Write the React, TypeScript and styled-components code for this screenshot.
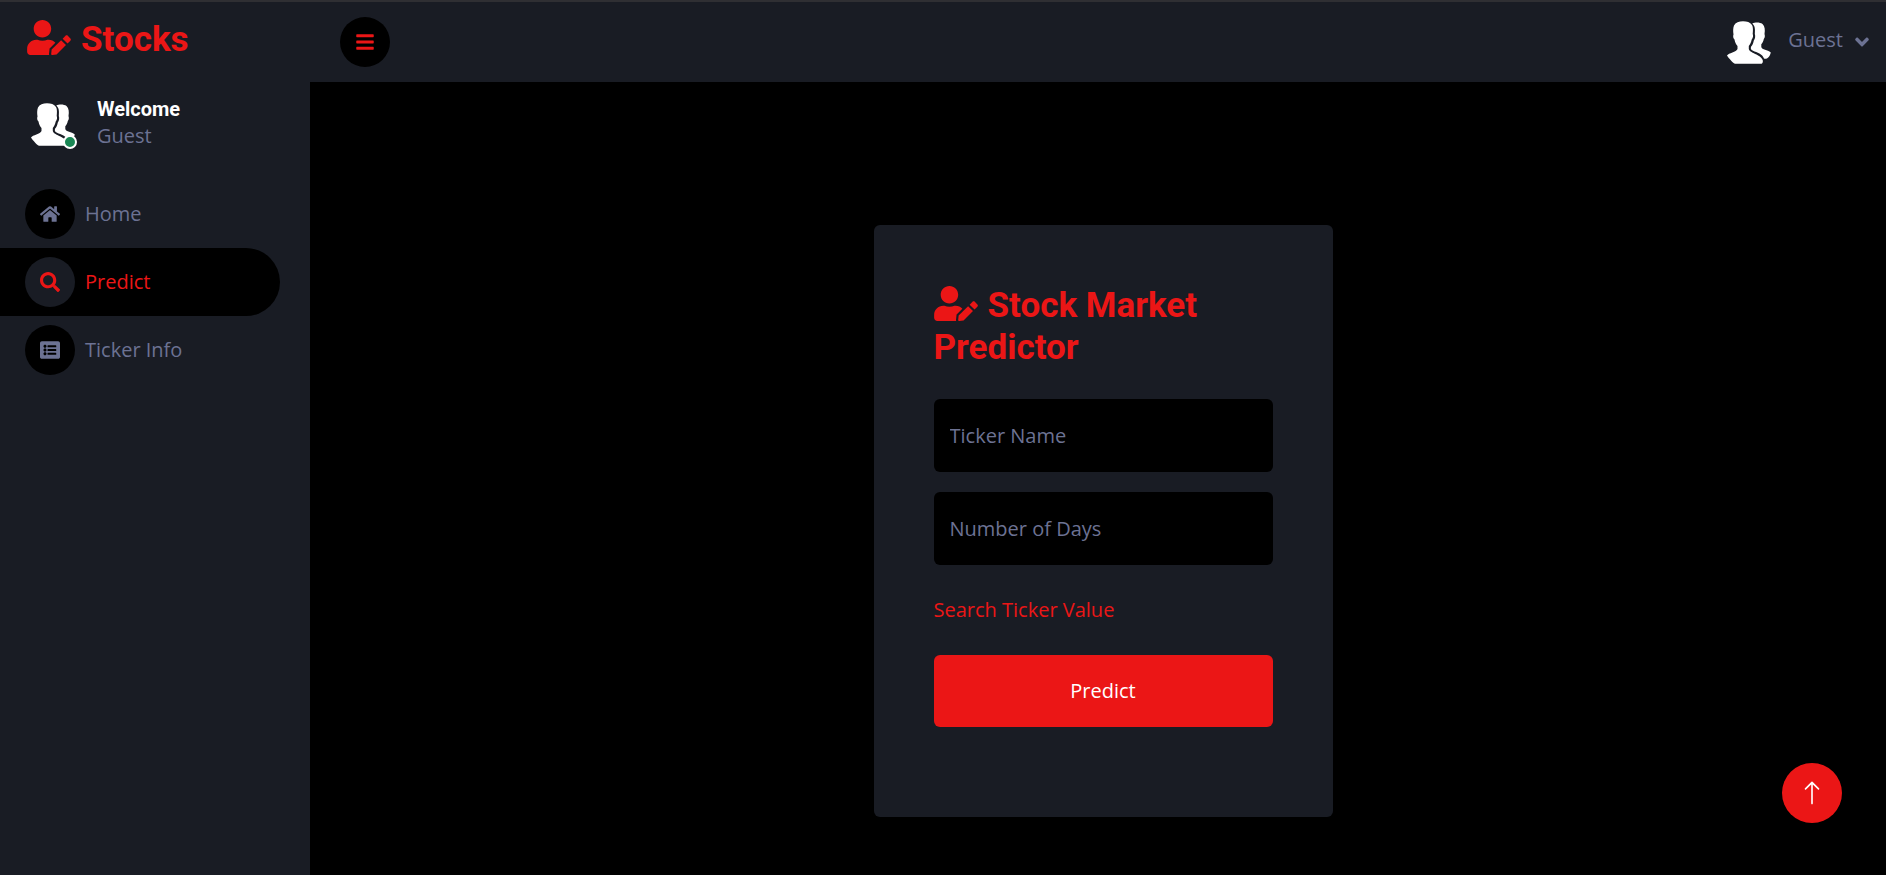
import React from "react";
import styled, { createGlobalStyle } from "styled-components";
import { FaUserEdit, FaHome, FaSearch, FaListAlt, FaBars, FaAngleDown } from "react-icons/fa";
import { BsArrowUp } from "react-icons/bs";

const red = "#eb1616";
const panel = "#191c24";
const muted = "#6c7293";

const GlobalStyle = createGlobalStyle`
  *, *::before, *::after { box-sizing: border-box; }
  body {
    margin: 0;
    background: #000;
    color: ${muted};
    font: 400 20px/30px "Open Sans", sans-serif;
  }
  button, input { font: inherit; }
  a { text-decoration: none; }
  h3, h6 { margin: 0; font-family: Roboto, sans-serif; font-weight: 700; }
`;

const Page = styled.div`
  display: grid;
  grid-template-columns: 310px 1fr;
  min-height: 100vh;
  border-top: 2px solid #2f2f33;
`;

const Sidebar = styled.aside`
  background: ${panel};
  padding: 17px 30px 20px 0;
`;

const Brand = styled.a`
  display: block;
  margin: 0 0 36px 27px;
`;

const Heading = styled.h3`
  color: ${red};
  font-size: 35px;
  line-height: 42px;

  svg { display: inline-block; width: 44px; height: 35px; vertical-align: -4px; margin-right: 10px; }
`;

const Profile = styled.div`
  display: flex;
  align-items: center;
  gap: 20px;
  margin: 0 0 29px 27px;
`;

const AvatarBox = styled.div`
  position: relative;
  width: 50px;
  height: 50px;
`;

const StatusDot = styled.span`
  position: absolute;
  right: 0;
  bottom: 0;
  width: 14px;
  height: 14px;
  border: 2px solid #fff;
  border-radius: 50%;
  background: #198754;
`;

const ProfileName = styled.h6`
  color: #fff;
  font-size: 20px;
  line-height: 24px;
`;

const Nav = styled.nav`
  display: flex;
  flex-direction: column;
`;

const NavIcon = styled.span<{ $active?: boolean }>`
  display: grid;
  place-items: center;
  width: 50px;
  height: 50px;
  border-radius: 50%;
  background: ${(p) => (p.$active ? panel : "#000")};

  svg { width: auto; height: 20px; }
`;

const NavLink = styled.a<{ $active?: boolean }>`
  display: flex;
  align-items: center;
  gap: 10px;
  padding: 9px 25px;
  border-radius: 0 34px 34px 0;
  color: ${(p) => (p.$active ? red : muted)};
  background: ${(p) => (p.$active ? "#000" : "transparent")};
`;

const Column = styled.div`
  display: flex;
  flex-direction: column;
`;

const TopBar = styled.header`
  display: flex;
  align-items: center;
  justify-content: space-between;
  height: 80px;
  padding: 0 17px 0 30px;
  background: ${panel};
`;

const MenuButton = styled.button`
  display: grid;
  place-items: center;
  width: 50px;
  height: 50px;
  padding: 0;
  border: 0;
  border-radius: 50%;
  background: #000;
  color: ${red};
`;

const UserMenu = styled.button`
  display: flex;
  align-items: center;
  padding: 0;
  border: 0;
  background: none;
  color: ${muted};
`;

const UserName = styled.span`
  margin: 0 12px 4px 15px;
`;

const Caret = styled(FaAngleDown)`
  width: 14px;
  height: 22px;
`;

const Main = styled.main`
  flex: 1;
  display: grid;
  place-items: start center;
  padding: 143px 0 30px 10px;
`;

const Card = styled.form`
  width: 459px;
  padding: 60px 60px 90px;
  border-radius: 6px;
  background: ${panel};
`;

const Fields = styled.div`
  display: grid;
  gap: 20px;
  margin: 30px 0;
`;

const Field = styled.input`
  width: 100%;
  height: 73px;
  padding: 0 16px;
  border: 0;
  border-radius: 6px;
  background: #000;
  color: ${muted};

  &::placeholder { color: ${muted}; opacity: 1; }
`;

const SearchLink = styled.a`
  display: block;
  color: ${red};
`;

const Submit = styled.button`
  display: block;
  width: 100%;
  height: 72px;
  margin-top: 30px;
  border: 0;
  border-radius: 6px;
  background: ${red};
  color: #fff;
`;

const BackToTop = styled.a`
  position: fixed;
  right: 44px;
  bottom: 52px;
  display: grid;
  place-items: center;
  width: 60px;
  height: 60px;
  border-radius: 50%;
  background: ${red};
  color: #fff;
`;

function Avatar() {
  return (
    <svg width="50" height="50" viewBox="0 0 50 50" fill="#fff" aria-hidden="true">
      <path d="M20 4.300C24 4.300 27 5.300 29 8C30.300 10 30 14 29.700 17C30.500 18.500 30 21 28.700 22.500C28.200 25.500 27 27.500 25.800 29V32C26.500 34.500 30 35.800 33.500 37.500C38 39.800 40.500 42.500 39.800 45C39.500 46 39 46.800 38 46.800H12C9.500 45.500 6 41.500 4 38.500C5.500 36 13.500 35 14.500 32V29C13 27.500 12 25.500 11.500 22.500C10.200 21.500 9.800 19 10.500 17.500C10 14 10 11 11 8.500C12.500 5.500 16 4.300 20 4.300Z" />
      <path d="M29.300 6.500C32 5 37 5 39.500 7C42 9.500 42.200 13 41.500 17C42.200 19 41.800 21 40.800 22C40.300 24.500 39.500 26 38.300 27.300V30C39 33 44.500 32.500 47.800 35.500C47.300 38 46 40.500 44.300 41.200C43 41.900 41.500 41.800 41 41.500C39.500 37 34 35.500 30 33.800C28 33 27.500 32 28 29.800C29.500 28 30.400 26 30.800 23.500C32.300 21.500 32.500 19 31.800 17C32.300 12 32 9 29.300 6.500Z" />
    </svg>
  );
}

export default function App() {
  return (
    <>
      <GlobalStyle />
      <Page>
        <Sidebar>
          <Brand href="#"><Heading><FaUserEdit />Stocks</Heading></Brand>
          <Profile>
            <AvatarBox><Avatar /><StatusDot /></AvatarBox>
            <div><ProfileName>Welcome</ProfileName><span>Guest</span></div>
          </Profile>
          <Nav>
            <NavLink href="#home"><NavIcon><FaHome /></NavIcon>Home</NavLink>
            <NavLink href="#predict" $active><NavIcon $active><FaSearch /></NavIcon>Predict</NavLink>
            <NavLink href="#ticker"><NavIcon><FaListAlt /></NavIcon>Ticker Info</NavLink>
          </Nav>
        </Sidebar>
        <Column>
          <TopBar>
            <MenuButton type="button" aria-label="Toggle menu"><FaBars /></MenuButton>
            <UserMenu type="button"><Avatar /><UserName>Guest</UserName><Caret /></UserMenu>
          </TopBar>
          <Main>
            <Card onSubmit={(e) => e.preventDefault()}>
              <Heading><FaUserEdit />Stock Market Predictor</Heading>
              <Fields>
                <Field aria-label="Ticker Name" placeholder="Ticker Name" />
                <Field aria-label="Number of Days" placeholder="Number of Days" />
              </Fields>
              <SearchLink href="#search">Search Ticker Value</SearchLink>
              <Submit type="submit">Predict</Submit>
            </Card>
          </Main>
        </Column>
      </Page>
      <BackToTop href="#" aria-label="Back to top"><BsArrowUp size={26} /></BackToTop>
    </>
  );
}
